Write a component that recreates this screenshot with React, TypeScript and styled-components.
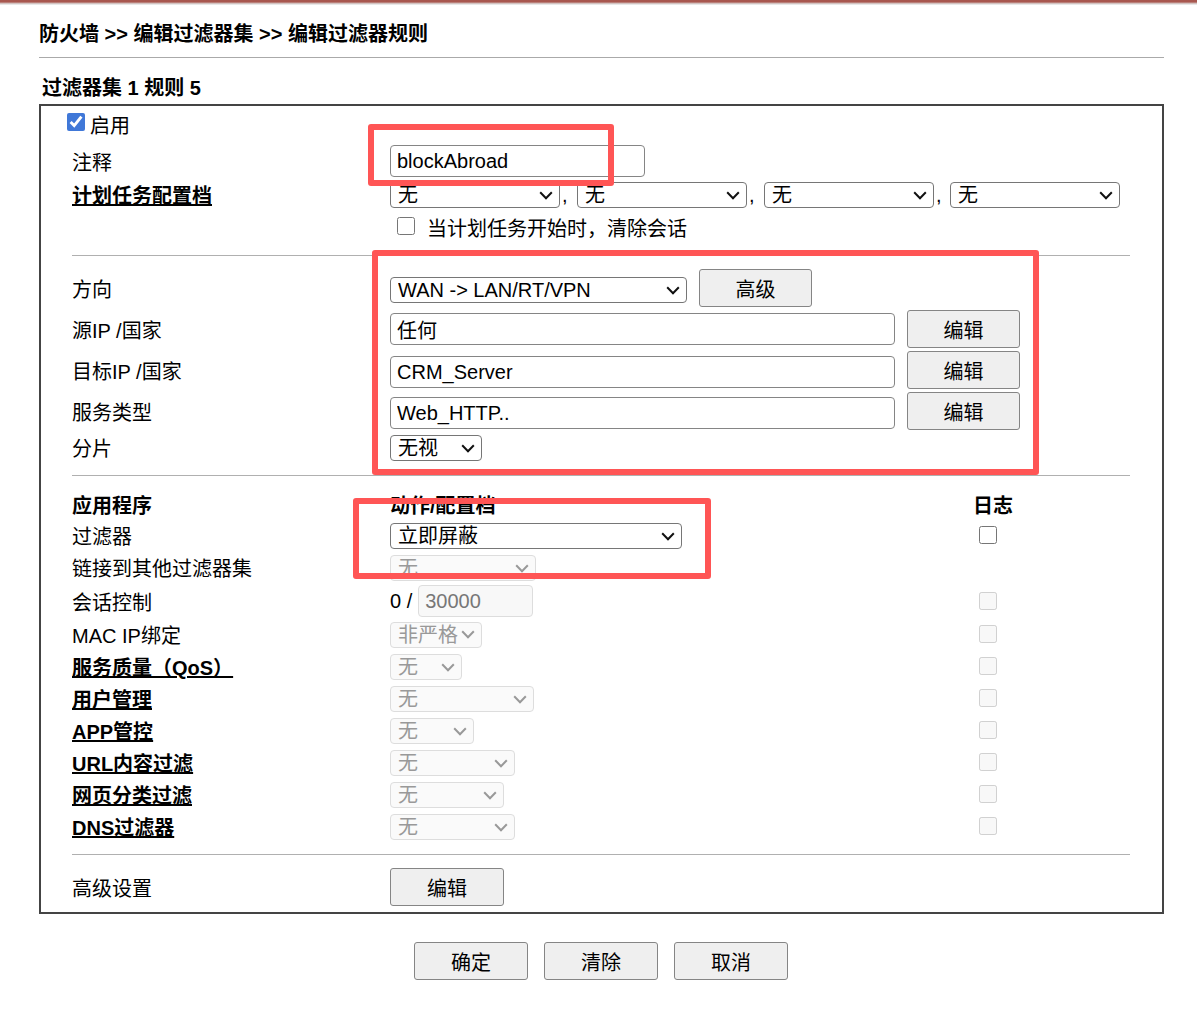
import React from "react";
import styled, { createGlobalStyle } from "styled-components";

const Global = createGlobalStyle`
  html, body { margin: 0; padding: 0; background: #fff; }
  body { font-family: "Liberation Sans", "Noto Sans CJK SC", sans-serif; font-size: 20px; color: #000; }
`;

const chevron = (color: string) =>
  `url("data:image/svg+xml,%3Csvg xmlns='http://www.w3.org/2000/svg' width='14' height='9' viewBox='0 0 14 9'%3E%3Cpath d='M1.2 1.3 L7 7.2 L12.8 1.3' fill='none' stroke='${color}' stroke-width='2'/%3E%3C/svg%3E")`;

const TopStrip = styled.div`
  height: 5px;
  background: linear-gradient(#a8574f 0, #a8574f 2px, #c9a8a4 3px, #dcdcdc 4px, #f4f4f4 5px);
`;

const Page = styled.div`
  position: relative;
  width: 1125px;
  margin-left: 39px;
`;

const Title = styled.h1`
  margin: 0;
  padding-top: 18px;
  height: 34px;
  line-height: 22px;
  font-size: 20px;
  font-weight: bold;
`;

const TopRule = styled.div`
  height: 1px;
  background: #aaa;
`;

const SubTitle = styled.h2`
  margin: 0;
  padding: 19px 0 0 3px;
  height: 27px;
  line-height: 22px;
  font-size: 20px;
  font-weight: bold;
`;

const Panel = styled.div`
  box-sizing: border-box;
  width: 1125px;
  height: 810px;
  border: 2px solid #444;
  padding: 0 32px 0 31px;
`;

const Row = styled.div<{ $h: number }>`
  display: grid;
  grid-template-columns: 318px 584px 1fr;
  align-items: center;
  height: ${(p) => p.$h}px;
`;

const FieldRow = styled(Row)`
  margin-top: 1px;
`;

const Rule = styled.div<{ $top: number; $bottom: number }>`
  height: 1px;
  background: #b0b0b0;
  margin: ${(p) => p.$top}px 0 ${(p) => p.$bottom}px;
`;

/* $drop moves the text down from the row's centre line, in pixels */
const Label = styled.span<{ $drop?: number }>`
  line-height: 22px;
  white-space: nowrap;
  margin-top: ${(p) => (p.$drop ?? 0) * 2}px;
`;

const LinkLabel = styled.a`
  font-weight: bold;
  line-height: 22px;
  color: #000;
  text-decoration: underline;
  white-space: nowrap;
  justify-self: start;
  margin-top: 2px;
`;

const HeadLabel = styled.span`
  font-weight: bold;
  line-height: 22px;
  white-space: nowrap;
  margin-top: 2px;
`;

const LogHead = styled(HeadLabel)`
  margin-left: -1px;
`;

const EnableCell = styled.label`
  display: flex;
  align-items: center;
  gap: 5px;
  margin-left: -5px;
  grid-column: 1 / 3;
`;

const Check = styled.input.attrs({ type: "checkbox" })`
  width: 18px;
  height: 18px;
  margin: 0;
  flex: none;
  accent-color: #4078d8;
`;

const EnableCheck = styled(Check)`
  margin-top: -6px;
`;

const LogCheck = styled(Check)<{ $up?: number }>`
  margin: ${(p) => -(p.$up ?? 1) * 2}px 0 0 5px;
`;

const Cell = styled.div`
  display: flex;
  align-items: center;
`;

const WideCell = styled(Cell)`
  grid-column: 2 / 4;
`;

const ClearCell = styled(WideCell)`
  gap: 12px;
  padding-left: 7px;
`;

const ClearCheck = styled(Check)`
  margin-top: -4px;
`;

const Select = styled.select<{ $w: number }>`
  appearance: none;
  box-sizing: border-box;
  width: ${(p) => p.$w}px;
  height: 26px;
  font: inherit;
  line-height: 22px;
  color: #000;
  background: #fff ${chevron("%23111")} no-repeat right 6px center;
  border: 1px solid #767676;
  border-radius: 4px;
  padding: 0 0 0 7px;
  flex: none;
  &:disabled {
    opacity: 1;
    color: #999;
    background: #fafafa ${chevron("%23999")} no-repeat right 6px center;
    border-color: #ddd;
  }
`;

const Comma = styled.span<{ $w?: number }>`
  width: ${(p) => p.$w ?? 17}px;
  flex: none;
  padding-left: 2px;
  box-sizing: border-box;
`;

const TextField = styled.input<{ $w: number; $drop?: number }>`
  box-sizing: border-box;
  width: ${(p) => p.$w}px;
  height: 32px;
  margin-top: ${(p) => (p.$drop ?? 0) * 2}px;
  font: inherit;
  color: #000;
  background: #fff;
  border: 1px solid #858585;
  border-radius: 4px;
  padding: 0 6px;
  flex: none;
  &:disabled {
    color: #777;
    background: #f8f8f8;
    border-color: #ddd;
  }
`;

const Button = styled.button<{ $w?: number }>`
  box-sizing: border-box;
  width: ${(p) => p.$w ?? 114}px;
  height: 38px;
  font: inherit;
  color: #000;
  background: #efefef;
  border: 1px solid #858585;
  border-radius: 3px;
  padding: 0;
  flex: none;
`;

const DirectionCell = styled(WideCell)`
  gap: 12px;
`;

const DirectionSelect = styled(Select)`
  margin-top: 4px;
`;

const FieldCell = styled(WideCell)`
  gap: 12px;
`;

const Slash = styled.span`
  margin-right: 6px;
  white-space: pre;
`;

const Actions = styled.div`
  display: flex;
  justify-content: center;
  gap: 16px;
  padding: 28px 1px 0 0;
`;

const Mark = styled.div<{ $x: number; $y: number; $w: number; $h: number }>`
  position: absolute;
  box-sizing: border-box;
  left: ${(p) => p.$x - 39}px;
  top: ${(p) => p.$y - 5}px;
  width: ${(p) => p.$w}px;
  height: ${(p) => p.$h}px;
  border: 6px solid #ff5555;
  border-radius: 3px;
  pointer-events: none;
`;

const None = ({ w, off }: { w: number; off?: boolean }) => (
  <Select $w={w} disabled={off} defaultValue="无">
    <option>无</option>
  </Select>
);

const disabledRows: { link: string; w: number }[] = [
  { link: "服务质量（QoS）", w: 72 },
  { link: "用户管理", w: 144 },
  { link: "APP管控", w: 84 },
  { link: "URL内容过滤", w: 125 },
  { link: "网页分类过滤", w: 114 },
  { link: "DNS过滤器", w: 125 },
];

const fields: { label: string; value: string; drop: number }[] = [
  { label: "源IP /国家", value: "任何", drop: 0 },
  { label: "目标IP /国家", value: "CRM_Server", drop: 2 },
  { label: "服务类型", value: "Web_HTTP..", drop: 2 },
];

export default function App() {
  return (
    <>
      <Global />
      <TopStrip />
      <Page>
        <Title>防火墙 &gt;&gt; 编辑过滤器集 &gt;&gt; 编辑过滤器规则</Title>
        <TopRule />
        <SubTitle>过滤器集 1 规则 5</SubTitle>
        <Panel>
          <Row $h={37}>
            <EnableCell>
              <EnableCheck defaultChecked />
              <Label $drop={1}>启用</Label>
            </EnableCell>
          </Row>
          <Row $h={36}>
            <Label $drop={2}>注释</Label>
            <Cell>
              <TextField $w={255} defaultValue="blockAbroad" />
            </Cell>
          </Row>
          <Row $h={32}>
            <LinkLabel>计划任务配置档</LinkLabel>
            <WideCell>
              <None w={170} />
              <Comma>,</Comma>
              <None w={170} />
              <Comma>,</Comma>
              <None w={170} />
              <Comma $w={16}>,</Comma>
              <None w={170} />
            </WideCell>
          </Row>
          <Row $h={34}>
            <ClearCell>
              <ClearCheck />
              <Label $drop={1}>当计划任务开始时，清除会话</Label>
            </ClearCell>
          </Row>
          <Rule $top={10} $bottom={12} />
          <Row $h={40}>
            <Label $drop={2}>方向</Label>
            <DirectionCell>
              <DirectionSelect $w={297} defaultValue="wan">
                <option value="wan">WAN -&gt; LAN/RT/VPN</option>
              </DirectionSelect>
              <Button $w={113}>高级</Button>
            </DirectionCell>
          </Row>
          {fields.map((f) => (
            <FieldRow $h={40} key={f.label}>
              <Label $drop={2}>{f.label}</Label>
              <FieldCell>
                <TextField $w={505} $drop={f.drop} defaultValue={f.value} />
                <Button $w={113}>编辑</Button>
              </FieldCell>
            </FieldRow>
          ))}
          <Row $h={34}>
            <Label $drop={1}>分片</Label>
            <Cell>
              <Select $w={92} defaultValue="无视">
                <option>无视</option>
              </Select>
            </Cell>
          </Row>
          <Rule $top={10} $bottom={14} />
          <Row $h={30}>
            <HeadLabel>应用程序</HeadLabel>
            <HeadLabel>动作/配置档</HeadLabel>
            <LogHead>日志</LogHead>
          </Row>
          <Row $h={32}>
            <Label $drop={1}>过滤器</Label>
            <Cell>
              <Select $w={292} defaultValue="立即屏蔽">
                <option>立即屏蔽</option>
              </Select>
            </Cell>
            <LogCheck />
          </Row>
          <Row $h={32}>
            <Label $drop={1}>链接到其他过滤器集</Label>
            <Cell>
              <None w={146} off />
            </Cell>
          </Row>
          <Row $h={34}>
            <Label $drop={2}>会话控制</Label>
            <Cell>
              <Slash>0 /</Slash>
              <TextField $w={115} disabled defaultValue="30000" />
            </Cell>
            <LogCheck $up={0} disabled />
          </Row>
          <Row $h={33}>
            <Label $drop={1}>MAC IP绑定</Label>
            <Cell>
              <Select $w={92} disabled defaultValue="非严格">
                <option>非严格</option>
              </Select>
            </Cell>
            <LogCheck $up={0.5} disabled />
          </Row>
          {disabledRows.map((r) => (
            <Row $h={32} key={r.link}>
              <LinkLabel>{r.link}</LinkLabel>
              <Cell>
                <None w={r.w} off />
              </Cell>
              <LogCheck disabled />
            </Row>
          ))}
          <Rule $top={11} $bottom={12} />
          <Row $h={40}>
            <Label $drop={2}>高级设置</Label>
            <Cell>
              <Button>编辑</Button>
            </Cell>
          </Row>
        </Panel>
        <Actions>
          <Button>确定</Button>
          <Button>清除</Button>
          <Button>取消</Button>
        </Actions>
        <Mark $x={368} $y={124} $w={246} $h={62} />
        <Mark $x={372} $y={250} $w={667} $h={225} />
        <Mark $x={353} $y={498} $w={358} $h={81} />
      </Page>
    </>
  );
}
